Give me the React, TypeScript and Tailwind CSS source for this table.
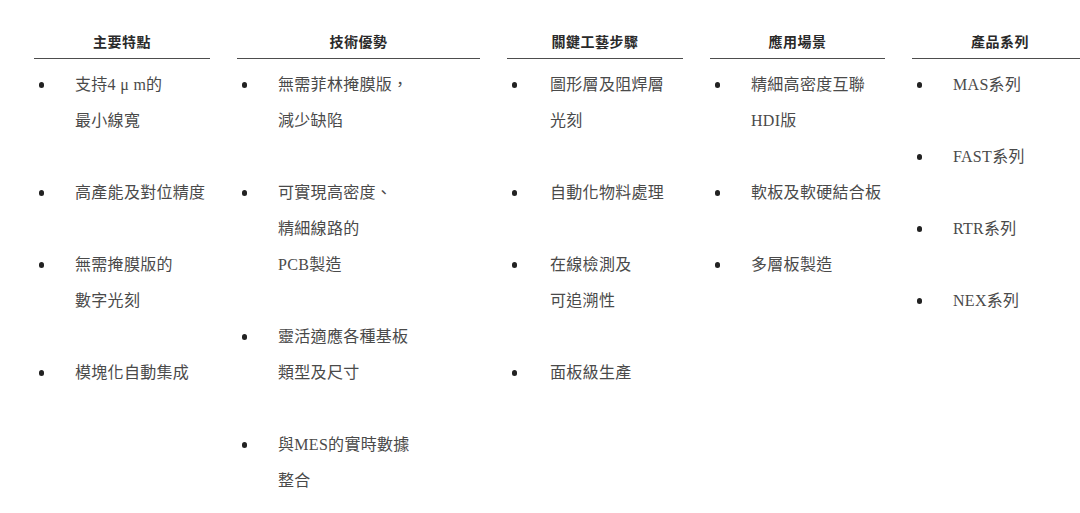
import React from 'react';

interface Column {
  title: string;
  width: string;
  indent: string;
  items: string[][];
}

const columns: Column[] = [
  {
    title: '主要特點',
    width: 'w-[176px]',
    indent: 'w-[41px]',
    items: [
      ['支持4 μ m的', '最小線寬'],
      ['高產能及對位精度'],
      ['無需掩膜版的', '數字光刻'],
      ['模塊化自動集成'],
    ],
  },
  {
    title: '技術優勢',
    width: 'w-[243px]',
    indent: 'w-[41px]',
    items: [
      ['無需菲林掩膜版，', '減少缺陷'],
      ['可實現高密度、', '精細線路的', 'PCB製造'],
      ['靈活適應各種基板', '類型及尺寸'],
      ['與MES的實時數據', '整合'],
    ],
  },
  {
    title: '關鍵工藝步驟',
    width: 'w-[176px]',
    indent: 'w-[43px]',
    items: [
      ['圖形層及阻焊層', '光刻'],
      ['自動化物料處理'],
      ['在線檢測及', '可追溯性'],
      ['面板級生產'],
    ],
  },
  {
    title: '應用場景',
    width: 'w-[175px]',
    indent: 'w-[41px]',
    items: [
      ['精細高密度互聯', 'HDI版'],
      ['軟板及軟硬結合板'],
      ['多層板製造'],
    ],
  },
  {
    title: '產品系列',
    width: 'w-[176px]',
    indent: 'w-[41px]',
    items: [['MAS系列'], ['FAST系列'], ['RTR系列'], ['NEX系列']],
  },
];

const FeatureColumn: React.FC<{ column: Column }> = ({ column }) => (
  <div className={`${column.width} flex-none`}>
    <div className="text-center text-[14px] font-bold leading-[20px] tracking-[0.5px] text-[#2a2a2a] pb-[5px] border-b-[1.5px] border-[#4d4d4d]">
      {column.title}
    </div>
    <ul className="mt-[8px] flex flex-col gap-[36px]">
      {column.items.map((lines, i) => (
        <li key={i} className="flex">
          <span className={`${column.indent} flex-none`}>
            <span className="block ml-[5px] mt-[15px] w-[5px] h-[6px] rounded-full bg-[#222]" />
          </span>
          <div className="text-[16px] leading-[36px] tracking-[0.3px] text-[#4a4a4a] whitespace-nowrap">
            {lines.map((line, j) => (
              <div key={j}>{line}</div>
            ))}
          </div>
        </li>
      ))}
    </ul>
  </div>
);

export default function App() {
  return (
    <div
      className="w-[1080px] h-[513px] bg-white overflow-hidden pt-[33px] pl-[34px]"
      style={{ fontFamily: '"Liberation Serif", "Noto Sans CJK TC", serif' }}
    >
      <div className="flex gap-[27px]">
        {columns.map((c) => (
          <FeatureColumn key={c.title} column={c} />
        ))}
      </div>
    </div>
  );
}
